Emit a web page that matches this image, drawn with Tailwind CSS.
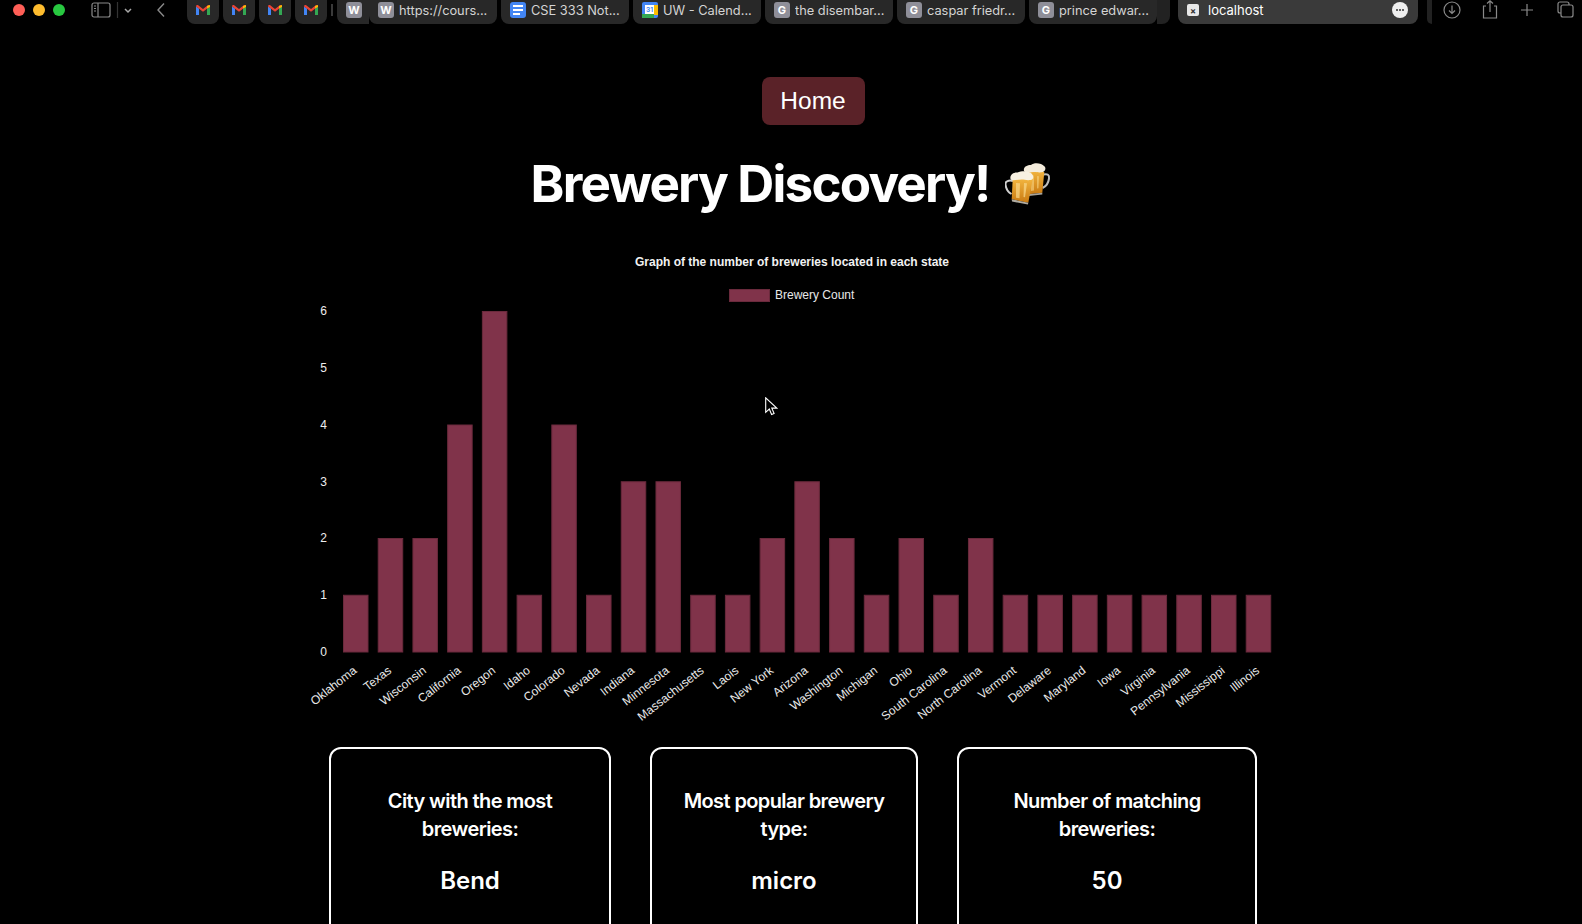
<!DOCTYPE html>
<html lang="en">
<head>
  <meta charset="UTF-8" />
  <meta name="viewport" content="width=device-width, initial-scale=1" />
  <title>Brewery Discovery</title>
  <script src="https://cdn.jsdelivr.net/npm/@tailwindcss/browser@4"></script>
</head>
<body class="bg-black text-white font-['Inter',sans-serif] h-screen overflow-hidden relative">

  <!-- browser toolbar -->
  <div class="flex h-6 items-start text-[12.8px] text-[#d4d4d4] *:shrink-0">
    <div class="flex items-center gap-2 h-5 pl-[13px] w-[87px]">
      <span class="w-3 h-3 rounded-full bg-[#ff5f57]"></span>
      <span class="w-3 h-3 rounded-full bg-[#febc2e]"></span>
      <span class="w-3 h-3 rounded-full bg-[#28c840]"></span>
    </div>
    <svg class="mt-[2px] w-[80px] h-[16px]" viewBox="0 0 80 16" fill="none" stroke="#8a8a8a" stroke-width="1.2">
      <rect x="5" y="1" width="18" height="14" rx="2" />
      <path d="M11 1v14M7 4h2M7 6.5h2M7 9h2" />
      <path d="M30.500 0v16" stroke="#333" />
      <path d="M38 7l3 3 3-3" stroke="#aaa" stroke-width="1.500" />
      <path d="M77 1.500l-6 6.500 6 6.500" stroke="#8a8a8a" stroke-width="1.400" />
    </svg>
    <div class="ml-[20px] flex gap-1">
      <div class="w-8 h-6 rounded-b-lg bg-[#282828] flex justify-center pt-[5px]"><svg width="14" height="10" viewBox="0 0 14 10"><path d="M0 1.500V10h3V3.500z" fill="#4285f4"/><path d="M11 3.500V10h3V1.500z" fill="#34a853"/><path d="M0 1.500C0 0 1.500-.4 2.500.4L7 4l4.500-3.600C12.500-.4 14 0 14 1.500L7 6.800z" fill="#ea4335"/><path d="M11 3.500V1L14 0v2z" fill="#fbbc04"/></svg></div>
      <div class="w-8 h-6 rounded-b-lg bg-[#282828] flex justify-center pt-[5px]"><svg width="14" height="10" viewBox="0 0 14 10"><path d="M0 1.500V10h3V3.500z" fill="#4285f4"/><path d="M11 3.500V10h3V1.500z" fill="#34a853"/><path d="M0 1.500C0 0 1.500-.4 2.500.4L7 4l4.500-3.600C12.500-.4 14 0 14 1.500L7 6.800z" fill="#ea4335"/><path d="M11 3.500V1L14 0v2z" fill="#fbbc04"/></svg></div>
      <div class="w-8 h-6 rounded-b-lg bg-[#282828] flex justify-center pt-[5px]"><svg width="14" height="10" viewBox="0 0 14 10"><path d="M0 1.500V10h3V3.500z" fill="#4285f4"/><path d="M11 3.500V10h3V1.500z" fill="#34a853"/><path d="M0 1.500C0 0 1.500-.4 2.500.4L7 4l4.500-3.600C12.500-.4 14 0 14 1.500L7 6.800z" fill="#ea4335"/><path d="M11 3.500V1L14 0v2z" fill="#fbbc04"/></svg></div>
      <div class="w-8 h-6 rounded-b-lg bg-[#282828] flex justify-center pt-[5px]"><svg width="14" height="10" viewBox="0 0 14 10"><path d="M0 1.500V10h3V3.500z" fill="#4285f4"/><path d="M11 3.500V10h3V1.500z" fill="#34a853"/><path d="M0 1.500C0 0 1.500-.4 2.500.4L7 4l4.500-3.600C12.500-.4 14 0 14 1.500L7 6.800z" fill="#ea4335"/><path d="M11 3.500V1L14 0v2z" fill="#fbbc04"/></svg></div>
    </div>
    <div class="ml-[4px] w-[2px] h-3 mt-1 bg-[#3a3a3a]"></div>
    <div class="ml-[4px] w-8 h-6 rounded-bl-lg bg-[#282828] pl-[9px] pt-[2px]">
      <span class="flex w-4 h-4 rounded-[3px] bg-[#8f8f99] items-center justify-center text-white text-[11px] font-bold">W</span>
    </div>
    <div class="flex gap-1">
      <div class="w-32 h-6 rounded-b-lg bg-[#282828] flex items-center gap-[5px] pl-[9px] pb-1">
        <span class="flex w-4 h-4 shrink-0 rounded-[3px] bg-[#8f8f99] items-center justify-center text-white text-[11px] font-bold">W</span>
        <span class="truncate pt-[2px]">https://cours...</span>
      </div>
      <div class="w-32 h-6 rounded-b-lg bg-[#282828] flex items-center gap-[5px] pl-[9px] pb-1">
        <span class="flex flex-col w-4 h-4 shrink-0 rounded-[3px] bg-[#4285f4] items-center justify-center gap-[2px]">
          <span class="w-[10px] h-[2px] bg-white"></span><span class="w-[10px] h-[2px] bg-white"></span><span class="w-[7px] h-[2px] bg-white self-start ml-[3px]"></span>
        </span>
        <span class="truncate pt-[2px]">CSE 333 Not...</span>
      </div>
      <div class="w-32 h-6 rounded-b-lg bg-[#282828] flex items-center gap-[5px] pl-[9px] pb-1">
        <svg class="shrink-0" width="16" height="16" viewBox="0 0 16 16"><rect width="16" height="16" rx="2" fill="#4285f4"/><rect x="12" y="3" width="4" height="10" fill="#fbbc04"/><rect x="0" y="12" width="12" height="4" fill="#34a853"/><rect x="3" y="3" width="9" height="9" fill="#fff"/><text x="7.500" y="10" font-size="6.500" font-weight="700" text-anchor="middle" fill="#4285f4">31</text></svg>
        <span class="truncate pt-[2px]">UW - Calend...</span>
      </div>
      <div class="w-32 h-6 rounded-b-lg bg-[#282828] flex items-center gap-[5px] pl-[9px] pb-1">
        <span class="flex w-4 h-4 shrink-0 rounded-[3px] bg-[#8f8f99] items-center justify-center text-white text-[11px] font-bold">G</span>
        <span class="truncate pt-[2px]">the disembar...</span>
      </div>
      <div class="w-32 h-6 rounded-b-lg bg-[#282828] flex items-center gap-[5px] pl-[9px] pb-1">
        <span class="flex w-4 h-4 shrink-0 rounded-[3px] bg-[#8f8f99] items-center justify-center text-white text-[11px] font-bold">G</span>
        <span class="truncate pt-[2px]">caspar friedr...</span>
      </div>
      <div class="w-32 h-6 rounded-b-lg bg-[#282828] flex items-center gap-[5px] pl-[9px] pb-1">
        <span class="flex w-4 h-4 shrink-0 rounded-[3px] bg-[#8f8f99] items-center justify-center text-white text-[11px] font-bold">G</span>
        <span class="truncate pt-[2px]">prince edwar...</span>
      </div>
    </div>
    <div class="w-[13px] h-6 rounded-br-lg bg-[#222]"></div>
    <div class="ml-2 w-[240px] h-6 rounded-b-lg bg-[#3a3a3a] flex items-center pl-[9px] pr-[10px] pb-1 text-white text-[13px]">
      <span class="flex w-3 h-3 rounded-[2px] bg-[#e8e8e8] items-center justify-center text-[#333] text-[9px] font-bold leading-none">×</span>
      <span class="ml-[9px] flex-1 pt-[2px]">localhost</span>
      <span class="flex w-4 h-4 rounded-full bg-[#eee] items-center justify-center gap-[1px]">
        <span class="w-[2px] h-[2px] rounded-full bg-[#333]"></span><span class="w-[2px] h-[2px] rounded-full bg-[#333]"></span><span class="w-[2px] h-[2px] rounded-full bg-[#333]"></span>
      </span>
    </div>
    <div class="ml-[9px] w-[5px] h-6 rounded-bl-lg bg-[#222]"></div>
    <svg class="w-[150px] h-5" viewBox="1432 0 150 20" fill="none" stroke="#8a8a8a" stroke-width="1.200">
      <circle cx="1452" cy="10" r="8" />
      <path d="M1452 5.500v8M1449 10.500l3 3 3-3" />
      <path d="M1486 6h-2.500v12h13V6H1494M1490 12V1M1487 3.500L1490 .8l3 2.700" />
      <path d="M1527 4v12M1521 10h12" />
      <rect x="1558" y="2" width="11" height="11" rx="2" />
      <rect x="1561" y="5" width="12" height="12" rx="2" fill="#000" />
    </svg>
  </div>

  <!-- page -->
  <main class="flex flex-col items-center">
    <a href="#" class="mt-[53px] ml-[44px] w-[103px] h-12 rounded-lg bg-[#5a2228] flex items-center justify-center text-[24.5px] font-['Liberation_Sans',Arial,sans-serif]">Home</a>

    <h1 class="mt-7 h-[62px] flex items-center gap-4 text-[51.2px] font-bold leading-none tracking-[-1.8px]">
      <span>Brewery Discovery!</span>
      <svg width="46" height="42" viewBox="0 0 46 42">
        <defs>
          <linearGradient id="beer" x1="0" y1="0" x2="0" y2="1">
            <stop offset="0" stop-color="#f3b640" />
            <stop offset="1" stop-color="#c97a12" />
          </linearGradient>
        </defs>
        <path d="M38.500 11.500c4-1 6 .5 5.500 4-.5 4-3 8-6.500 9.500" fill="none" stroke="#bdbdbd" stroke-width="2" />
        <path d="M21.700 7L39.300 9l-2 20.700-14 1.600z" fill="url(#beer)" />
        <path d="M26 12l3 .5v15l-3 .5zM32 13l2 .3-.5 12-1.500.2z" fill="#f8d584" opacity=".6" />
        <path d="M23.300 31.300l14-1.600v1.700l-13.500 1.700z" fill="#a8a39a" />
        <path d="M19 8c-1-4 3-6 7-6 3-3 11-2 13 1 2 1 2 5-1 6-4 1-6 0-8 0-4 0-9 2-11-1z" fill="#f4ecdc" />
        <path d="M8 18c-4-1-8 0-7.500 3.500C1 26 3 29 6.500 31" fill="none" stroke="#d0d0d0" stroke-width="2" />
        <path d="M7.700 15.700h20L23.300 39.700 6.700 36.300z" fill="url(#beer)" />
        <path d="M11 20l4 .2-.5 15-3.500-.5zM19 20l3 .2-2 14-1.500-.2z" fill="#fad98c" opacity=".7" />
        <path d="M6.700 36.300l16.600 3.400-.4 1.800L7 38.500z" fill="#b0aba0" />
        <path d="M5.500 16c-1-4 3-7 7-6.500 4-2 12-2 14.500 1.500 2 2 1.500 6-1.500 6-4 .5-6-.5-9-.5-4 0-10 2-11-.5z" fill="#f8f1e2" />
      </svg>
    </h1>

    <svg id="chart" class="mt-[35px] block font-['Liberation_Sans',Arial,sans-serif]" width="1000" height="497" viewBox="291 250 1000 497"></svg>

    <div class="flex gap-[39px] ml-1 text-center">
      <div class="w-[282px] h-[240px] shrink-0 border-2 border-white rounded-xl pt-[38px] px-8">
        <h3 class="text-xl leading-7 font-semibold tracking-[-0.6px]">City with the most breweries:</h3>
        <p class="mt-[22px] text-2xl leading-8 font-semibold">Bend</p>
      </div>
      <div class="w-[268px] h-[240px] shrink-0 border-2 border-white rounded-xl pt-[38px] px-6">
        <h3 class="text-xl leading-7 font-semibold tracking-[-0.6px]">Most popular brewery type:</h3>
        <p class="mt-[22px] text-2xl leading-8 font-semibold">micro</p>
      </div>
      <div class="w-[300px] h-[240px] shrink-0 border-2 border-white rounded-xl pt-[38px] px-8">
        <h3 class="text-xl leading-7 font-semibold tracking-[-0.6px]">Number of matching breweries:</h3>
        <p class="mt-[22px] text-2xl leading-8 font-semibold">50</p>
      </div>
    </div>
  </main>

  <!-- mouse pointer -->
  <svg class="absolute left-[765px] top-[397px]" width="13" height="19" viewBox="0 0 13 19">
    <path d="M.7.8v14.500l3.600-3.300 2.300 5.500 2.500-1-2.300-5.400h5z" fill="#000" stroke="#fff" stroke-width="1.100" />
  </svg>

  <script>
    const states = [
      ['Oklahoma', 1], ['Texas', 2], ['Wisconsin', 2], ['California', 4], ['Oregon', 6], ['Idaho', 1],
      ['Colorado', 4], ['Nevada', 1], ['Indiana', 3], ['Minnesota', 3], ['Massachusetts', 1], ['Laois', 1],
      ['New York', 2], ['Arizona', 3], ['Washington', 2], ['Michigan', 1], ['Ohio', 2], ['South Carolina', 1],
      ['North Carolina', 2], ['Vermont', 1], ['Delaware', 1], ['Maryland', 1], ['Iowa', 1], ['Virginia', 1],
      ['Pennsylvania', 1], ['Mississippi', 1], ['Illinois', 1]
    ];

    const baseY = 652;
    const unit = 56.75;
    const pitch = 34.72;
    let svg = '';

    svg += '<text x="792" y="266" font-size="12" font-weight="700" fill="#f2f2f2" text-anchor="middle">Graph of the number of breweries located in each state</text>';
    svg += '<rect x="729.500" y="289.500" width="40" height="12" fill="#80334a" stroke="#6a2a3c" />';
    svg += '<text x="775" y="299" font-size="12" fill="#e8e8e8">Brewery Count</text>';

    for (let i = 0; i <= 6; i++) {
      svg += `<text x="327" y="${baseY - i * unit + 3.8}" font-size="12" fill="#eeeeee" text-anchor="end">${i}</text>`;
    }

    states.forEach(([name, count], i) => {
      const x = 343.500 + i * pitch;
      const h = count * unit;
      svg += `<rect x="${x}" y="${baseY - h}" width="24.5" height="${h}" fill="#80334a" stroke="#6a2a3c" />`;
      const lx = x + 14;
      svg += `<text transform="translate(${lx} 672) rotate(-38)" font-size="12" fill="#e8e8e8" text-anchor="end">${name}</text>`;
    });

    document.getElementById('chart').innerHTML = svg;
  </script>

</body>
</html>
